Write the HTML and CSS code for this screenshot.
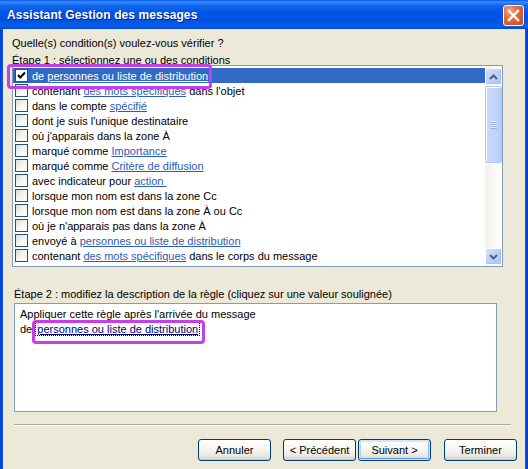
FILE: index.html
```html
<!DOCTYPE html>
<html lang="fr">
<head>
<meta charset="utf-8">
<title>Assistant Gestion des messages</title>
<link rel="stylesheet" href="styles.css">
</head>
<body>
<div class="window">
  <div class="titlebar">
    <span class="title">Assistant Gestion des messages</span>
    <span class="close"><svg width="21" height="21" viewBox="0 0 21 21"><path d="M6 6 L15 15 M15 6 L6 15" stroke="#fff" stroke-width="2.4" stroke-linecap="square"/></svg></span>
  </div>
  <div class="client">
    <div class="q">Quelle(s) condition(s) voulez-vous vérifier ?</div>
    <div class="step1">Étape 1 : sélectionnez une ou des conditions</div>
    <div class="listbox">
      <div class="rows">
        <div class="row sel"><span class="cb"><svg width="11" height="11" viewBox="0 0 11 11"><path d="M2 5 L4.3 7.5 L9 2.5" fill="none" stroke="#000" stroke-width="2"/></svg></span><span>de <span class="lk">personnes ou liste de distribution</span></span></div>
        <div class="row"><span class="cb"></span><span>contenant <span class="lk">des mots spécifiques</span> dans l'objet</span></div>
        <div class="row"><span class="cb"></span><span>dans le compte <span class="lk">spécifié</span></span></div>
        <div class="row"><span class="cb"></span><span>dont je suis l'unique destinataire</span></div>
        <div class="row"><span class="cb"></span><span>où j'apparais dans la zone À</span></div>
        <div class="row"><span class="cb"></span><span>marqué comme <span class="lk">Importance</span></span></div>
        <div class="row"><span class="cb"></span><span>marqué comme <span class="lk">Critère de diffusion</span></span></div>
        <div class="row"><span class="cb"></span><span>avec indicateur pour <span class="lk">action&nbsp;</span></span></div>
        <div class="row"><span class="cb"></span><span>lorsque mon nom est dans la zone Cc</span></div>
        <div class="row"><span class="cb"></span><span>lorsque mon nom est dans la zone À ou Cc</span></div>
        <div class="row"><span class="cb"></span><span>où je n'apparais pas dans la zone À</span></div>
        <div class="row"><span class="cb"></span><span>envoyé à <span class="lk">personnes ou liste de distribution</span></span></div>
        <div class="row"><span class="cb"></span><span>contenant <span class="lk">des mots spécifiques</span> dans le corps du message</span></div>
      </div>
      <div class="vscroll">
        <div class="sbtn"><svg width="9" height="6" viewBox="0 0 9 6"><path d="M1 5 L4.5 1.5 L8 5" fill="none" stroke="#4D6185" stroke-width="2"/></svg></div>
        <div class="thumb"><span class="grip"></span></div>
        <div class="track"></div>
        <div class="sbtn"><svg width="9" height="6" viewBox="0 0 9 6"><path d="M1 1 L4.5 4.5 L8 1" fill="none" stroke="#4D6185" stroke-width="2"/></svg></div>
      </div>
    </div>
    <div class="step2">Étape 2 : modifiez la description de la règle (cliquez sur une valeur soulignée)</div>
    <div class="desc">
      <div class="dline">Appliquer cette règle après l'arrivée du message</div>
      <div class="dline">de <span class="dlink">personnes ou liste de distribution</span></div>
    </div>
    <div class="sep"></div>
    <div class="buttons">
      <button class="btn b-cancel">Annuler</button>
      <button class="btn b-prev">&lt; Précédent</button>
      <button class="btn b-next">Suivant &gt;</button>
      <button class="btn b-finish">Terminer</button>
    </div>
  </div>
  <div class="mark mark1"></div>
  <div class="mark mark2"></div>
</div>
</body>
</html>
```
FILE: styles.css
```css
* { box-sizing: border-box; }
html, body { margin: 0; padding: 0; }
body {
  font-family: "Liberation Sans", Arial, sans-serif;
  font-size: 11px;
  color: #000;
  background: #ECE9D8;
}
.window {
  position: relative;
  width: 528px;
  height: 469px;
  background: linear-gradient(90deg, #0838C8 0, #0A52E6 2px, #0A52E6 525px, #0838C8 528px);
  display: flex;
  flex-direction: column;
  overflow: hidden;
}
.titlebar {
  height: 29px;
  flex: none;
  display: flex;
  align-items: center;
  justify-content: space-between;
  padding: 0 4px 0 7px;
  background: linear-gradient(180deg, #0058EE 0%, #3A8DFB 7%, #1168EE 18%, #0055E5 45%, #0054E3 75%, #0A60EB 90%, #0047D3 100%);
}
.title {
  color: #fff;
  font-weight: bold;
  font-size: 12px;
  letter-spacing: 0.1px;
  text-shadow: 1px 1px 0 #0A1C8A;
  margin-top: 1px;
}
.close {
  width: 21px;
  height: 21px;
  border: 1px solid #fff;
  border-radius: 3px;
  background: radial-gradient(circle at 30% 25%, #F2A482 0%, #E46A40 40%, #CB461C 100%);
  display: flex;
  align-items: center;
  justify-content: center;
  margin-top: 1px;
}
.close svg { display: block; margin: -1px; }
.client {
  flex: 1;
  margin: 0 3px 0 3px;
  background: #ECE9D8;
  display: flex;
  flex-direction: column;
}
.q {
  margin: 8px 0 0 9px;
  line-height: 13px;
  height: 13px;
}
.step1 {
  margin: 4px 0 0 9px;
  line-height: 13px;
  height: 11px;
  overflow: hidden;
}
.listbox {
  margin-left: 9px;
  width: 491px;
  height: 202px;
  border: 1px solid #7F9DB9;
  background: #fff;
  display: flex;
}
.rows {
  flex: 1;
  padding-top: 2px;
}
.row {
  height: 15px;
  display: flex;
  align-items: center;
  padding-left: 2px;
  white-space: nowrap;
}
.cb {
  width: 13px;
  height: 13px;
  border: 1px solid #1C5180;
  background: linear-gradient(135deg, #DCDCD7 0%, #F4F4F0 50%, #FFFFFF 100%);
  margin-right: 4px;
  flex: none;
  display: flex;
  align-items: center;
  justify-content: center;
}
.cb svg { display: block; }
.row.sel { background: #316AC5; color: #fff; }
.row.sel .cb { background: #fff; }
.lk { color: #2D5BB5; text-decoration: underline; }
.row.sel .lk { color: #fff; }
.vscroll {
  width: 17px;
  flex: none;
  display: flex;
  flex-direction: column;
  background: linear-gradient(90deg, #F3F1EC 0%, #FEFEFB 100%);
  padding-top: 2px;
  padding-bottom: 1px;
}
.sbtn {
  height: 17px;
  flex: none;
  border: 1px solid #fff;
  border-radius: 2px;
  background: linear-gradient(135deg, #D2DEFC 0%, #BCCEF8 60%, #B0C6F5 100%);
  box-shadow: inset -1px -1px 0 #A5BDF1;
  display: flex;
  align-items: center;
  justify-content: center;
}
.thumb {
  height: 77px;
  flex: none;
  margin-top: 1px;
  border: 1px solid #B3C8F4;
  border-radius: 2px;
  background: linear-gradient(90deg, #C9D8FC 0%, #C4D5FB 60%, #B6CBF7 100%);
  box-shadow: inset 1px 1px 0 #fff;
  display: flex;
  align-items: center;
  justify-content: center;
}
.grip {
  width: 6px;
  height: 8px;
  background: repeating-linear-gradient(180deg, #EEF4FE 0, #EEF4FE 1px, #8CB0F8 1px, #8CB0F8 2px);
}
.track { flex: 1; }
.step2 {
  margin: 21px 0 0 11px;
  line-height: 13px;
  height: 13px;
}
.desc {
  margin: 2px 0 0 11px;
  width: 483px;
  height: 109px;
  border: 1px solid #7F9DB9;
  background: #fff;
  padding: 3px 0 0 5px;
}
.dline { line-height: 15px; height: 15px; white-space: nowrap; }
.dlink {
  color: #000080;
  text-decoration: underline;
  outline: 1px dotted #000;
  outline-offset: 0;
  padding: 0 1px;
  margin-left: 1px;
}
.sep {
  margin: 12px 0 0 11px;
  width: 497px;
  height: 2px;
  border-top: 1px solid #ACA899;
  border-bottom: 1px solid #FFFFFF;
}
.buttons {
  margin-top: 13px;
  padding-right: 8px;
  display: flex;
  justify-content: flex-end;
}
.btn {
  width: 73px;
  height: 22px;
  padding: 0;
  font-family: "Liberation Sans", Arial, sans-serif;
  font-size: 11px;
  color: #000;
  border: 1px solid #003C74;
  border-radius: 3px;
  background: linear-gradient(180deg, #FFFFFF 0%, #F6F6F3 40%, #ECEBE6 75%, #D6D0C5 100%);
  box-shadow: inset 0 -1px 0 #D0CBBE;
}
.b-prev { margin-left: 12px; }
.b-next {
  margin-left: 2px;
  box-shadow: inset 0 0 0 1px #CEE7FF, inset 0 -2px 0 #6A95E4, inset 0 1px 0 1px #CEE7FF, inset 1px 0 0 1px #B7D3F5, inset -1px 0 0 1px #97B7EB;
}
.b-finish { margin-left: 13px; }
.mark {
  position: absolute;
  border: 3px solid #C53FE8;
  border-radius: 4px;
}
.mark1 { left: 7px; top: 64px; width: 205px; height: 25px; }
.mark2 { left: 32px; top: 320px; width: 173px; height: 24px; }
```
